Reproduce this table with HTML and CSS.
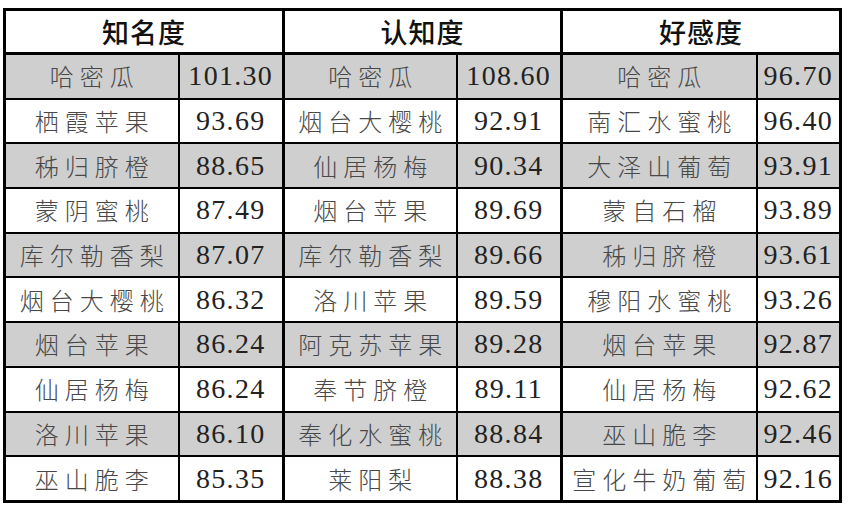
FILE: index.html
```html
<!DOCTYPE html>
<html lang="en">
<head>
<meta charset="utf-8">
<link rel="stylesheet" href="styles.css">
</head>
<body>
<div class="page">
<table class="rank">
<colgroup>
<col class="c-name1"><col class="c-val1"><col class="c-name2"><col class="c-val2"><col class="c-name3"><col class="c-val3">
</colgroup>
<thead>
<tr><th colspan="2">知名度</th><th colspan="2" class="grp">认知度</th><th colspan="2" class="grp">好感度</th></tr>
</thead>
<tbody>
<tr class="gray"><td class="nm">哈密瓜</td><td class="num">101.30</td><td class="nm grp">哈密瓜</td><td class="num">108.60</td><td class="nm grp">哈密瓜</td><td class="num">96.70</td></tr>
<tr><td class="nm">栖霞苹果</td><td class="num">93.69</td><td class="nm grp">烟台大樱桃</td><td class="num">92.91</td><td class="nm grp">南汇水蜜桃</td><td class="num">96.40</td></tr>
<tr class="gray"><td class="nm">秭归脐橙</td><td class="num">88.65</td><td class="nm grp">仙居杨梅</td><td class="num">90.34</td><td class="nm grp">大泽山葡萄</td><td class="num">93.91</td></tr>
<tr><td class="nm">蒙阴蜜桃</td><td class="num">87.49</td><td class="nm grp">烟台苹果</td><td class="num">89.69</td><td class="nm grp">蒙自石榴</td><td class="num">93.89</td></tr>
<tr class="gray"><td class="nm">库尔勒香梨</td><td class="num">87.07</td><td class="nm grp">库尔勒香梨</td><td class="num">89.66</td><td class="nm grp">秭归脐橙</td><td class="num">93.61</td></tr>
<tr><td class="nm">烟台大樱桃</td><td class="num">86.32</td><td class="nm grp">洛川苹果</td><td class="num">89.59</td><td class="nm grp">穆阳水蜜桃</td><td class="num">93.26</td></tr>
<tr class="gray"><td class="nm">烟台苹果</td><td class="num">86.24</td><td class="nm grp">阿克苏苹果</td><td class="num">89.28</td><td class="nm grp">烟台苹果</td><td class="num">92.87</td></tr>
<tr><td class="nm">仙居杨梅</td><td class="num">86.24</td><td class="nm grp">奉节脐橙</td><td class="num">89.11</td><td class="nm grp">仙居杨梅</td><td class="num">92.62</td></tr>
<tr class="gray"><td class="nm">洛川苹果</td><td class="num">86.10</td><td class="nm grp">奉化水蜜桃</td><td class="num">88.84</td><td class="nm grp">巫山脆李</td><td class="num">92.46</td></tr>
<tr><td class="nm">巫山脆李</td><td class="num">85.35</td><td class="nm grp">莱阳梨</td><td class="num">88.38</td><td class="nm grp">宣化牛奶葡萄</td><td class="num">92.16</td></tr>
</tbody>
</table>
</div>
</body>
</html>
```

FILE: styles.css
```css
html, body {
  margin: 0;
  padding: 0;
  background: #ffffff;
}

.page {
  padding: 8px 0 0 3px;
  width: 848px;
  height: 507px;
  box-sizing: border-box;
}

.rank {
  border-collapse: collapse;
  table-layout: fixed;
  width: 836px;
  border: 3px solid #000;
}

.c-name1 { width: 174px; }
.c-val1 { width: 105px; }
.c-name2 { width: 173px; }
.c-val2 { width: 105px; }
.c-name3 { width: 195px; }
.c-val3 { width: 84px; }

.rank th {
  height: 41px;
  padding: 0;
  border: 2px solid #000;
  border-bottom-width: 3px;
  font-family: "Noto Sans CJK SC", sans-serif;
  font-weight: 500;
  font-size: 27px;
  letter-spacing: 1px;
  color: #111;
  text-align: center;
  vertical-align: middle;
  line-height: 1;
}

.rank td {
  height: 42.7px;
  padding: 0;
  border: 2px solid #000;
  text-align: center;
  vertical-align: middle;
  line-height: 1;
  color: #484848;
  white-space: nowrap;
}

.rank .grp {
  border-left-width: 3px;
}

.rank td.nm {
  font-family: "Noto Sans CJK SC", sans-serif;
  font-weight: 300;
  font-size: 24px;
  letter-spacing: 6px;
  text-indent: 6px;
}

.rank td.num {
  font-family: "Liberation Serif", "Times New Roman", serif;
  font-size: 28px;
  letter-spacing: 1.3px;
  color: #222;
}

.rank tr.gray td {
  background: #cfcfcf;
}
```
